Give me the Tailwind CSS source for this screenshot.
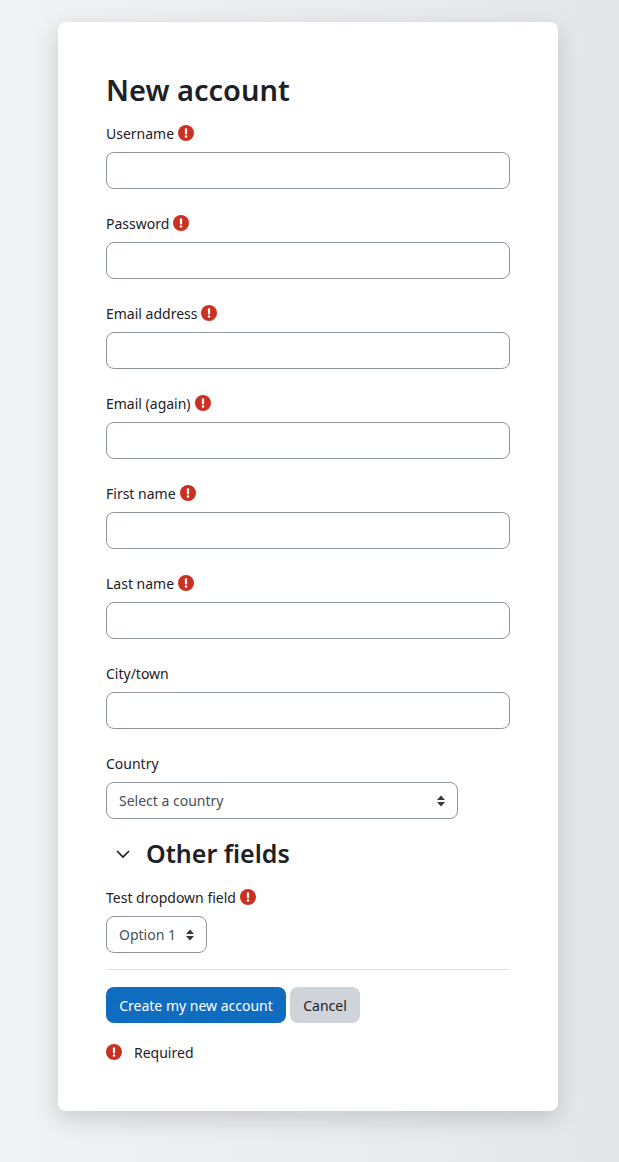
<!DOCTYPE html>
<html lang="en">
<head>
    <meta charset="UTF-8">
    <title>New account</title>
    <script src="https://cdn.jsdelivr.net/npm/@tailwindcss/browser@4"></script>
</head>
<body class="min-h-screen bg-gradient-to-r from-[#f1f2f4] to-[#e4e7ea] font-['Noto_Sans',sans-serif] text-[14px] leading-[23px] text-[#1d2125]">

<div class="pt-[22px] pl-[58px] pb-[51px]">
    <div class="w-[500px] h-[1089px] rounded-lg bg-white px-12 pt-[49px] shadow-[0_8px_24px_rgba(0,0,0,0.16)]">
        <h1 class="text-[29px] leading-[38px] font-semibold mb-[13px]">New account</h1>

        <form>
            <!-- Required text fields -->
            <div class="mb-[23px]">
                <label class="flex items-start gap-1 h-[23px] mb-[7px]">Username
                    <svg class="w-4 h-4 mt-[3px]" viewBox="0 0 16 16"><circle cx="8" cy="8" r="8" fill="#ca3120"/><rect x="6.9" y="3.2" width="2.2" height="6.2" rx="1" fill="#fff"/><circle cx="8" cy="11.6" r="1.25" fill="#fff"/></svg>
                </label>
                <input type="text" class="block w-full h-[37px] rounded-lg border border-[#8f959e] bg-white">
            </div>
            <div class="mb-[23px]">
                <label class="flex items-start gap-1 h-[23px] mb-[7px]">Password
                    <svg class="w-4 h-4 mt-[3px]" viewBox="0 0 16 16"><circle cx="8" cy="8" r="8" fill="#ca3120"/><rect x="6.9" y="3.2" width="2.2" height="6.2" rx="1" fill="#fff"/><circle cx="8" cy="11.6" r="1.25" fill="#fff"/></svg>
                </label>
                <input type="password" class="block w-full h-[37px] rounded-lg border border-[#8f959e] bg-white">
            </div>
            <div class="mb-[23px]">
                <label class="flex items-start gap-1 h-[23px] mb-[7px]">Email address
                    <svg class="w-4 h-4 mt-[3px]" viewBox="0 0 16 16"><circle cx="8" cy="8" r="8" fill="#ca3120"/><rect x="6.9" y="3.2" width="2.2" height="6.2" rx="1" fill="#fff"/><circle cx="8" cy="11.6" r="1.25" fill="#fff"/></svg>
                </label>
                <input type="text" class="block w-full h-[37px] rounded-lg border border-[#8f959e] bg-white">
            </div>
            <div class="mb-[23px]">
                <label class="flex items-start gap-1 h-[23px] mb-[7px]">Email (again)
                    <svg class="w-4 h-4 mt-[3px]" viewBox="0 0 16 16"><circle cx="8" cy="8" r="8" fill="#ca3120"/><rect x="6.9" y="3.2" width="2.2" height="6.2" rx="1" fill="#fff"/><circle cx="8" cy="11.6" r="1.25" fill="#fff"/></svg>
                </label>
                <input type="text" class="block w-full h-[37px] rounded-lg border border-[#8f959e] bg-white">
            </div>
            <div class="mb-[23px]">
                <label class="flex items-start gap-1 h-[23px] mb-[7px]">First name
                    <svg class="w-4 h-4 mt-[3px]" viewBox="0 0 16 16"><circle cx="8" cy="8" r="8" fill="#ca3120"/><rect x="6.9" y="3.2" width="2.2" height="6.2" rx="1" fill="#fff"/><circle cx="8" cy="11.6" r="1.25" fill="#fff"/></svg>
                </label>
                <input type="text" class="block w-full h-[37px] rounded-lg border border-[#8f959e] bg-white">
            </div>
            <div class="mb-[23px]">
                <label class="flex items-start gap-1 h-[23px] mb-[7px]">Last name
                    <svg class="w-4 h-4 mt-[3px]" viewBox="0 0 16 16"><circle cx="8" cy="8" r="8" fill="#ca3120"/><rect x="6.9" y="3.2" width="2.2" height="6.2" rx="1" fill="#fff"/><circle cx="8" cy="11.6" r="1.25" fill="#fff"/></svg>
                </label>
                <input type="text" class="block w-full h-[37px] rounded-lg border border-[#8f959e] bg-white">
            </div>
            <div class="mb-[23px]">
                <label class="flex items-start gap-1 h-[23px] mb-[7px]">City/town</label>
                <input type="text" class="block w-full h-[37px] rounded-lg border border-[#8f959e] bg-white">
            </div>

            <!-- Country -->
            <div class="mb-[16px]">
                <label class="flex items-start gap-1 h-[23px] mb-[7px]">Country</label>
                <div class="relative w-[352px] h-[37px]">
                    <select class="block w-full h-full appearance-none rounded-lg border border-[#8f959e] bg-white pl-3 text-[#495057]">
                        <option>Select a country</option>
                    </select>
                    <svg class="absolute right-[12px] top-[13px] w-[10px] h-[12px]" viewBox="0 0 10 12"><path d="M5 0.5 9 5H1Z M1 7H9L5 11.5Z" fill="#343a40"/></svg>
                </div>
            </div>

            <!-- Other fields -->
            <div class="flex items-center h-[38px] mb-[13px]">
                <svg class="w-[16px] h-[10px] ml-[9px] mr-[15px]" viewBox="0 0 16 10"><path d="M2 2l6 6 6-6" fill="none" stroke="#1d2125" stroke-width="1.7"/></svg>
                <h2 class="text-[25px] leading-[36px] pb-[2px] font-semibold">Other fields</h2>
            </div>
            <div class="mb-4">
                <label class="flex items-start gap-1 h-[23px] mb-[7px]">Test dropdown field
                    <svg class="w-4 h-4 mt-[3px]" viewBox="0 0 16 16"><circle cx="8" cy="8" r="8" fill="#ca3120"/><rect x="6.9" y="3.2" width="2.2" height="6.2" rx="1" fill="#fff"/><circle cx="8" cy="11.6" r="1.25" fill="#fff"/></svg>
                </label>
                <div class="relative w-[101px] h-[37px]">
                    <select class="block w-full h-full appearance-none rounded-lg border border-[#8f959e] bg-white pl-3 text-[#495057]">
                        <option>Option 1</option>
                    </select>
                    <svg class="absolute right-[12px] top-[13px] w-[10px] h-[12px]" viewBox="0 0 10 12"><path d="M5 0.5 9 5H1Z M1 7H9L5 11.5Z" fill="#343a40"/></svg>
                </div>
            </div>

            <hr class="border-[#dee2e6] mb-[17px]">

            <div class="flex gap-1 mb-[18px]">
                <button type="button" class="w-[180px] h-[36px] pt-px rounded-lg bg-[#0f6cbf] text-white">Create my new account</button>
                <button type="button" class="w-[70px] h-[36px] pt-px rounded-lg bg-[#ced4da] text-[#1d2125]">Cancel</button>
            </div>

            <div class="flex items-start gap-3">
                <svg class="w-4 h-4 mt-[3px]" viewBox="0 0 16 16"><circle cx="8" cy="8" r="8" fill="#ca3120"/><rect x="6.9" y="3.2" width="2.2" height="6.2" rx="1" fill="#fff"/><circle cx="8" cy="11.6" r="1.25" fill="#fff"/></svg>
                <span>Required</span>
            </div>
        </form>
    </div>
</div>

</body>
</html>
